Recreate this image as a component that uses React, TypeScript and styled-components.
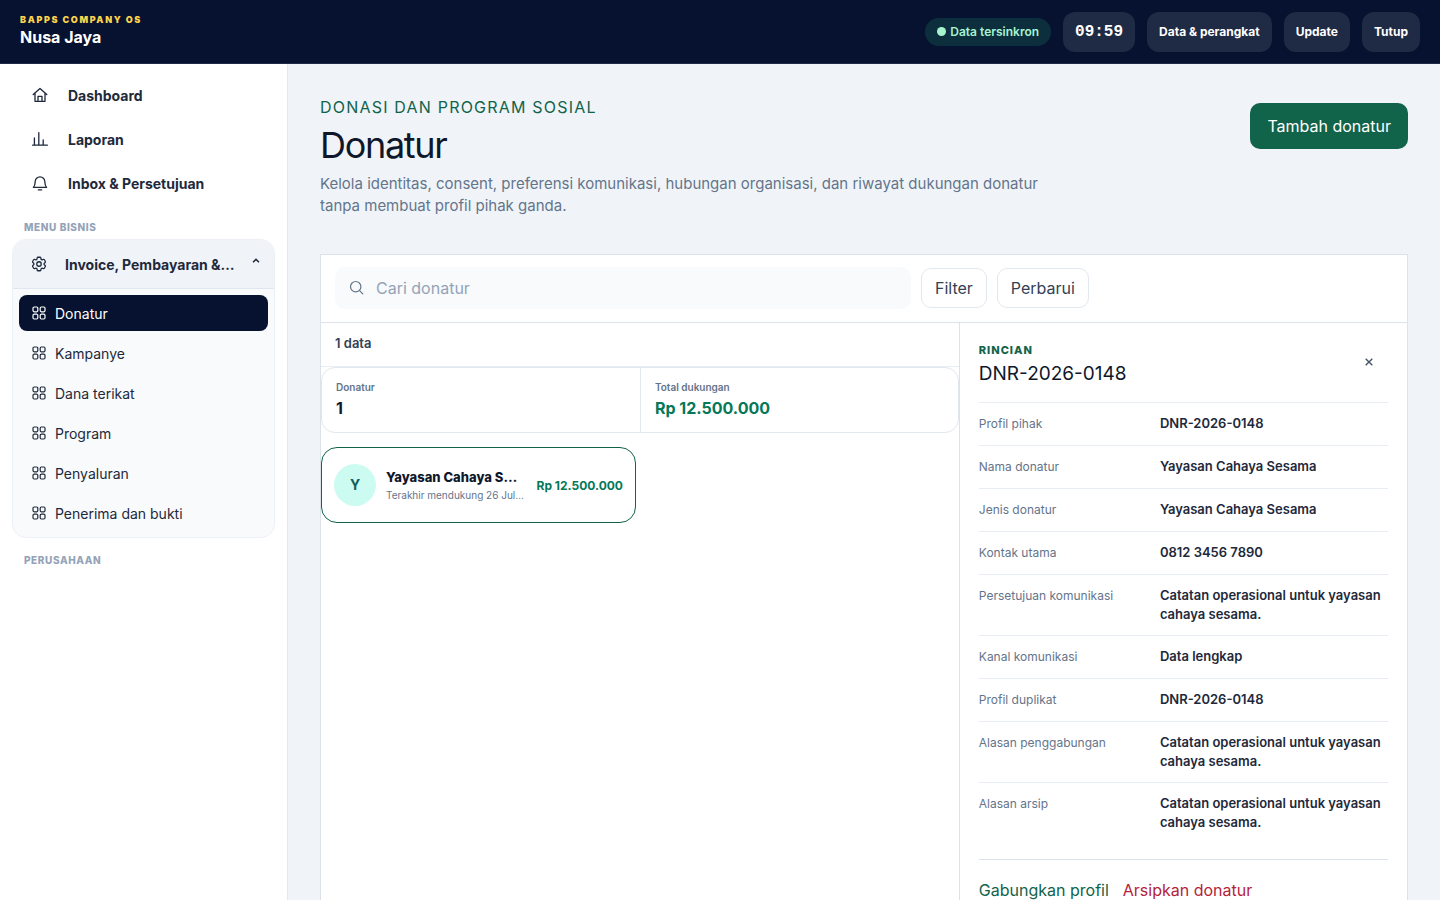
import React from "react";
import styled, { createGlobalStyle, css } from "styled-components";
import { HiOutlineCog6Tooth } from "react-icons/hi2";

const GlobalStyle = createGlobalStyle`
  *, *::before, *::after { box-sizing: border-box; }
  body { margin: 0; background: #f0f4f9; color: #0f172a; font-family: Inter, "Liberation Sans", sans-serif; font-size: 16px; }
  button, input { font: inherit; color: inherit; }
  button { cursor: pointer; }
  h1, h2, p, dl, dd, ul { margin: 0; padding: 0; font-weight: 400; }
`;

const Shell = styled.div`
  height: 100vh;
  display: flex;
  flex-direction: column;
`;

const TopBar = styled.header`
  flex: none;
  height: 64px;
  padding: 0 20px;
  display: flex;
  align-items: center;
  justify-content: space-between;
  background: #06122f;
  border-bottom: 1px solid #1f2a44;
  color: #ffffff;
`;

const Brand = styled.div`
  padding-bottom: 2px;
`;

const BrandTag = styled.div`
  color: #fcd34d;
  font-size: 9px;
  line-height: 12px;
  font-weight: 900;
  letter-spacing: 0.18em;
`;

const BrandName = styled.div`
  font-size: 16px;
  line-height: 22px;
  font-weight: 700;
`;

const TopActions = styled.div`
  display: flex;
  align-items: center;
  gap: 12px;
`;

const SyncPill = styled.div`
  display: flex;
  align-items: center;
  gap: 4px;
  height: 28px;
  padding: 0 12px;
  border-radius: 14px;
  background: #0d2f3d;
  color: #a7f3d0;
  font-size: 12px;
  font-weight: 600;
`;

const SyncDot = styled.span`
  width: 9px;
  height: 9px;
  border-radius: 50%;
  background: currentColor;
`;

const topBox = css`
  height: 40px;
  padding: 0 12px;
  border: 0;
  border-radius: 12px;
  background: #1f2a44;
  color: #ffffff;
  font-weight: 700;
`;

const Clock = styled.time`
  ${topBox}
  font-family: "Liberation Mono", monospace;
  font-size: 16px;
  line-height: 40px;
`;

const TopButton = styled.button`
  ${topBox}
  font-size: 12px;
`;

const Body = styled.div`
  flex: 1;
  min-height: 0;
  display: flex;
`;

const Sidebar = styled.nav`
  flex: none;
  width: 288px;
  padding: 9px 12px;
  background: #ffffff;
  border-right: 1px solid #e2e8f0;
  overflow: hidden;
`;

const NavLink = styled.a`
  display: flex;
  align-items: center;
  gap: 20px;
  height: 44px;
  padding: 0 20px;
  color: #1e293b;
  font-size: 14px;
  font-weight: 700;
  text-decoration: none;
  svg { flex: none; }
`;

const SectionLabel = styled.div`
  padding: 16px 12px 6px;
  color: #94a3b8;
  font-size: 10px;
  line-height: 12px;
  font-weight: 800;
  letter-spacing: 0.06em;
`;

const Group = styled.section`
  border: 1px solid #edf1f7;
  border-radius: 14px;
  background: #f8fafc;
  overflow: hidden;
`;

const GroupHead = styled.button`
  display: flex;
  align-items: center;
  width: 100%;
  height: 49px;
  padding: 0 14px 0 17px;
  border: 0;
  border-bottom: 1px solid #dfe6ef;
  background: #f0f4f9;
  color: #1e293b;
  font-size: 14px;
  font-weight: 700;
  text-align: left;
  svg { flex: none; }
`;

const GroupTitle = styled.span`
  flex: 1;
  min-width: 0;
  margin: 0 16px 0 17px;
  overflow: hidden;
  text-overflow: ellipsis;
  white-space: nowrap;
`;

const SubList = styled.ul`
  display: grid;
  gap: 4px;
  padding: 6px;
  list-style: none;
`;

const SubLink = styled.a<{ $active?: boolean }>`
  display: flex;
  align-items: center;
  gap: 8px;
  height: 36px;
  padding: 0 12px;
  border-radius: 8px;
  background: ${(p) => (p.$active ? "#06122f" : "transparent")};
  color: ${(p) => (p.$active ? "#ffffff" : "#1e293b")};
  font-size: 14px;
  text-decoration: none;
`;

const Main = styled.main`
  flex: 1;
  min-width: 0;
  padding: 32px;
  overflow: hidden;
`;

const PageHead = styled.div`
  display: flex;
  align-items: flex-start;
  justify-content: space-between;
  gap: 24px;
  margin-bottom: 37px;
`;

const Intro = styled.div`
  max-width: 740px;
`;

const Eyebrow = styled.p`
  color: #11634a;
  line-height: 22px;
  letter-spacing: 0.075em;
`;

const Title = styled.h1`
  margin: 7px 0 8px;
  font-size: 36px;
  line-height: 40px;
  letter-spacing: -0.036em;
`;

const Lead = styled.p`
  color: #64748b;
  font-size: 15px;
  line-height: 22px;
`;

const PrimaryButton = styled.button`
  flex: none;
  height: 46px;
  margin-top: 7px;
  padding: 0 17px;
  border: 0;
  border-radius: 10px;
  background: #11634a;
  color: #ffffff;
`;

const Panel = styled.section`
  border: 1px solid #dbe2ea;
  background: #ffffff;
`;

const Toolbar = styled.div`
  display: flex;
  align-items: center;
  gap: 10px;
  min-height: 68px;
  padding: 0 14px 2px;
  border-bottom: 1px solid #dbe2ea;
`;

const SearchBox = styled.label`
  flex: 0 1 576px;
  display: flex;
  align-items: center;
  gap: 12px;
  height: 42px;
  padding: 0 14px;
  border-radius: 10px;
  background: #f8fafc;
  color: #64748b;
`;

const SearchInput = styled.input`
  flex: 1;
  min-width: 0;
  padding: 0;
  border: 0;
  outline: 0;
  background: transparent;
  &::placeholder { color: #94a3b8; opacity: 1; }
`;

const GhostButton = styled.button`
  height: 40px;
  padding: 0 13px;
  border: 1px solid #e2e8f0;
  border-radius: 10px;
  background: #ffffff;
  color: #334155;
`;

const Split = styled.div`
  display: grid;
  grid-template-columns: minmax(0, 10fr) minmax(0, 7fr);
`;

const ListPane = styled.div`
  border-right: 1px solid #dbe2ea;
`;

const Count = styled.div`
  height: 44px;
  padding: 0 14px;
  border-bottom: 1px solid #e8edf3;
  color: #334155;
  font-size: 13px;
  line-height: 40px;
  font-weight: 600;
`;

const Stats = styled.div`
  display: grid;
  grid-template-columns: 1fr 1fr;
  margin-bottom: 14px;
  border: 1px solid #e2e8f0;
  border-radius: 14px;
`;

const Stat = styled.div`
  padding: 11px 14px 13px;
  & + & { border-left: 1px solid #e2e8f0; }
`;

const StatLabel = styled.div`
  color: #64748b;
  font-size: 10px;
  line-height: 16px;
  font-weight: 600;
`;

const StatValue = styled.div<{ $money?: boolean }>`
  margin-top: 2px;
  color: ${(p) => (p.$money ? "#047857" : "#0f172a")};
  font-size: 16px;
  line-height: 22px;
  font-weight: 700;
`;

const Cards = styled.div`
  display: grid;
  grid-template-columns: 1fr 1fr;
  gap: 8px;
`;

const DonorCard = styled.button`
  display: flex;
  align-items: center;
  gap: 10px;
  min-width: 0;
  height: 76px;
  padding: 0 12px;
  border: 1px solid #11634a;
  border-radius: 16px;
  background: #ffffff;
  text-align: left;
`;

const Avatar = styled.span`
  flex: none;
  width: 42px;
  height: 42px;
  border-radius: 50%;
  background: #ccfbf1;
  color: #115e59;
  font-size: 14px;
  line-height: 42px;
  font-weight: 700;
  text-align: center;
`;

const DonorText = styled.span`
  flex: 1;
  min-width: 0;
  display: grid;
  gap: 2px;
  padding: 2px 2px 0 0;
`;

const DonorName = styled.span`
  overflow: hidden;
  text-overflow: ellipsis;
  white-space: nowrap;
  color: #0f172a;
  font-size: 13px;
  line-height: 16px;
  font-weight: 800;
`;

const DonorNote = styled(DonorName)`
  color: #64748b;
  font-size: 10px;
  font-weight: 400;
`;

const DonorTotal = styled.span`
  color: #047857;
  font-size: 12px;
  font-weight: 700;
`;

const Detail = styled.aside`
  padding: 18px 19px;
`;

const DetailHead = styled.div`
  display: flex;
  align-items: flex-start;
  justify-content: space-between;
  height: 61px;
`;

const DetailTag = styled.p`
  color: #11634a;
  font-size: 11px;
  line-height: 18px;
  font-weight: 800;
  letter-spacing: 1px;
`;

const DetailTitle = styled.h2`
  margin-top: 2px;
  font-size: 19px;
  line-height: 26px;
`;

const CloseButton = styled.button`
  width: 38px;
  height: 38px;
  padding: 0;
  border: 0;
  background: transparent;
  color: #475569;
`;

const Fields = styled.dl`
  margin-bottom: 16px;
`;

const Field = styled.div`
  display: grid;
  grid-template-columns: 3fr 4fr;
  gap: 10px;
  min-height: 43px;
  padding: 11px 0;
  border-top: 1px solid #e8edf3;
  font-size: 13px;
  line-height: 19px;
`;

const FieldName = styled.dt`
  color: #64748b;
  font-size: 12px;
`;

const FieldValue = styled.dd`
  color: #1e293b;
  font-weight: 600;
`;

const DetailActions = styled.div`
  display: flex;
  gap: 14px;
  padding-top: 19px;
  border-top: 1px solid #dbe2ea;
`;

const TextButton = styled.button<{ $danger?: boolean }>`
  padding: 0;
  border: 0;
  background: transparent;
  color: ${(p) => (p.$danger ? "#b4233a" : "#11634a")};
  line-height: 22px;
`;

const LineIcon = ({ d }: { d: string }) => (
  <svg width="16" height="16" viewBox="0 0 16 16" fill="none" stroke="currentColor" strokeWidth="1.3" strokeLinecap="round" strokeLinejoin="round" aria-hidden="true">
    <path d={d} />
  </svg>
);

const HomeIcon = () => (
  <LineIcon d="M1.2 7.6 8 1.5l6.8 6.1M3 6.3v8h10v-8M6 14.2V9.3h4v4.9" />
);

const ReportIcon = () => <LineIcon d="M.6 14.2h14.8M2.4 14V7M6.8 14V1.6M11.2 14V9" />;

const BellIcon = () => (
  <LineIcon d="M1.4 12.4C2.8 11 3.2 9.4 3.2 6.6a4.8 4.8 0 0 1 9.6 0c0 2.8.4 4.4 1.8 5.8ZM6.3 14.8h3.4" />
);

const GridIcon = () => (
  <svg width="16" height="16" viewBox="0 0 16 16" fill="none" stroke="currentColor" strokeWidth="1.2" aria-hidden="true">
    <rect x="2" y="2" width="4.8" height="4.8" rx="1.2" />
    <rect x="9.2" y="2" width="4.8" height="4.8" rx="1.2" />
    <rect x="2" y="9.2" width="4.8" height="4.8" rx="1.2" />
    <rect x="9.2" y="9.2" width="4.8" height="4.8" rx="1.2" />
  </svg>
);

const SearchIcon = () => (
  <svg width="15" height="15" viewBox="0 0 15 15" fill="none" stroke="currentColor" strokeWidth="1.2" strokeLinecap="round" aria-hidden="true">
    <circle cx="6.7" cy="6.7" r="5.2" />
    <path d="m10.6 10.6 3.2 3.2" />
  </svg>
);

const ChevronUp = () => (
  <svg width="8" height="14" viewBox="0 0 8 14" fill="none" stroke="currentColor" strokeWidth="1.5" aria-hidden="true">
    <path d="M1 5.2 4 2.4l3 2.8" />
  </svg>
);

const CloseIcon = () => (
  <svg width="8" height="8" viewBox="0 0 8 8" fill="none" stroke="currentColor" strokeWidth="1.4" aria-hidden="true">
    <path d="m.7.7 6.6 6.6M7.3.7.7 7.3" />
  </svg>
);

const modules = ["Donatur", "Kampanye", "Dana terikat", "Program", "Penyaluran", "Penerima dan bukti"];

const fields: [string, string][] = [
  ["Profil pihak", "DNR-2026-0148"],
  ["Nama donatur", "Yayasan Cahaya Sesama"],
  ["Jenis donatur", "Yayasan Cahaya Sesama"],
  ["Kontak utama", "0812 3456 7890"],
  ["Persetujuan komunikasi", "Catatan operasional untuk yayasan cahaya sesama."],
  ["Kanal komunikasi", "Data lengkap"],
  ["Profil duplikat", "DNR-2026-0148"],
  ["Alasan penggabungan", "Catatan operasional untuk yayasan cahaya sesama."],
  ["Alasan arsip", "Catatan operasional untuk yayasan cahaya sesama."],
];

export default function App() {
  return (
    <Shell>
      <GlobalStyle />
      <TopBar>
        <Brand>
          <BrandTag>BAPPS COMPANY OS</BrandTag>
          <BrandName>Nusa Jaya</BrandName>
        </Brand>
        <TopActions>
          <SyncPill><SyncDot />Data tersinkron</SyncPill>
          <Clock>09:59</Clock>
          <TopButton>Data &amp; perangkat</TopButton>
          <TopButton>Update</TopButton>
          <TopButton>Tutup</TopButton>
        </TopActions>
      </TopBar>
      <Body>
        <Sidebar>
          <NavLink href="#dashboard"><HomeIcon />Dashboard</NavLink>
          <NavLink href="#laporan"><ReportIcon />Laporan</NavLink>
          <NavLink href="#inbox"><BellIcon />Inbox &amp; Persetujuan</NavLink>
          <SectionLabel>MENU BISNIS</SectionLabel>
          <Group>
            <GroupHead aria-expanded="true">
              <HiOutlineCog6Tooth size={18} strokeWidth={1.7} />
              <GroupTitle>Invoice, Pembayaran &amp; Donasi</GroupTitle>
              <ChevronUp />
            </GroupHead>
            <SubList>
              {modules.map((name, i) => (
                <li key={name}>
                  <SubLink href={"#" + name} $active={i === 0}>
                    <GridIcon />
                    {name}
                  </SubLink>
                </li>
              ))}
            </SubList>
          </Group>
          <SectionLabel>PERUSAHAAN</SectionLabel>
        </Sidebar>
        <Main>
          <PageHead>
            <Intro>
              <Eyebrow>DONASI DAN PROGRAM SOSIAL</Eyebrow>
              <Title>Donatur</Title>
              <Lead>
                Kelola identitas, consent, preferensi komunikasi, hubungan organisasi, dan riwayat dukungan donatur
                tanpa membuat profil pihak ganda.
              </Lead>
            </Intro>
            <PrimaryButton>Tambah donatur</PrimaryButton>
          </PageHead>
          <Panel>
            <Toolbar>
              <SearchBox>
                <SearchIcon />
                <SearchInput type="text" placeholder="Cari donatur" aria-label="Cari donatur" />
              </SearchBox>
              <GhostButton>Filter</GhostButton>
              <GhostButton>Perbarui</GhostButton>
            </Toolbar>
            <Split>
              <ListPane>
                <Count>1 data</Count>
                <Stats>
                  <Stat>
                    <StatLabel>Donatur</StatLabel>
                    <StatValue>1</StatValue>
                  </Stat>
                  <Stat>
                    <StatLabel>Total dukungan</StatLabel>
                    <StatValue $money>Rp 12.500.000</StatValue>
                  </Stat>
                </Stats>
                <Cards>
                  <DonorCard>
                    <Avatar>Y</Avatar>
                    <DonorText>
                      <DonorName>Yayasan Cahaya Sesama</DonorName>
                      <DonorNote>Terakhir mendukung 26 Juli 2026</DonorNote>
                    </DonorText>
                    <DonorTotal>Rp 12.500.000</DonorTotal>
                  </DonorCard>
                </Cards>
              </ListPane>
              <Detail>
                <DetailHead>
                  <div>
                    <DetailTag>RINCIAN</DetailTag>
                    <DetailTitle>DNR-2026-0148</DetailTitle>
                  </div>
                  <CloseButton aria-label="Tutup rincian"><CloseIcon /></CloseButton>
                </DetailHead>
                <Fields>
                  {fields.map(([name, value]) => (
                    <Field key={name}>
                      <FieldName>{name}</FieldName>
                      <FieldValue>{value}</FieldValue>
                    </Field>
                  ))}
                </Fields>
                <DetailActions>
                  <TextButton>Gabungkan profil</TextButton>
                  <TextButton $danger>Arsipkan donatur</TextButton>
                </DetailActions>
              </Detail>
            </Split>
          </Panel>
        </Main>
      </Body>
    </Shell>
  );
}
